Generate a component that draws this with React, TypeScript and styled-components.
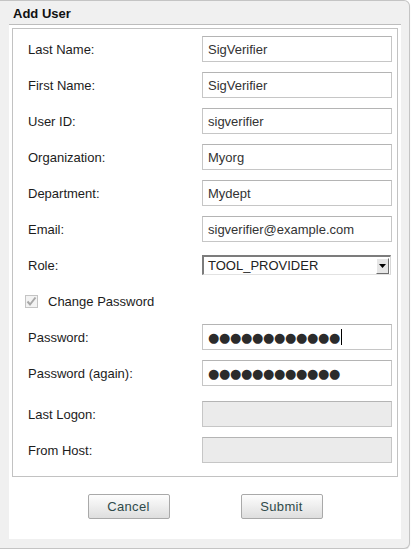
import React from "react";
import styled, { createGlobalStyle } from "styled-components";

const Global = createGlobalStyle`
  html, body { margin: 0; padding: 0; background: #ffffff; }
  body { font-family: "Liberation Sans", Arial, sans-serif; font-size: 13px; }
`;

const Dialog = styled.div`
  box-sizing: border-box;
  width: 410px;
  height: 549px;
  background: #f0f0f0;
  border: 1px solid #c4c4c4;
  border-left: none;
  border-radius: 0 6px 6px 0;
  box-shadow: 0 1px 1px rgba(0, 0, 0, 0.12);
  padding: 0 8px 9px 9px;
  display: flex;
  flex-direction: column;
`;

const Header = styled.div`
  height: 22px;
  display: flex;
  align-items: center;
  padding: 1px 0 0 4px;
  font-weight: bold;
  font-size: 13px;
  color: #111;
`;

const Panel = styled.div`
  flex: 1;
  background: #ffffff;
  border-top: 1px solid #bdbdbd;
  padding: 3px 3px 0 3px;
  display: flex;
  flex-direction: column;
`;

const Fieldset = styled.div`
  border: 1px solid #c2c2c2;
  padding: 7px 5px 13px 15px;
  display: flex;
  flex-direction: column;
  gap: 10px;
`;

const Row = styled.div<{ $extraTop?: number }>`
  display: grid;
  grid-template-columns: 174px 190px;
  align-items: center;
  height: 26px;
  margin-top: ${(p) => p.$extraTop ?? 0}px;
`;

const Label = styled.div`
  color: #1c1c1c;
  font-size: 13px;
`;

const Field = styled.div<{ $disabled?: boolean }>`
  box-sizing: border-box;
  height: 26px;
  border: 1px solid #c6c6c6;
  border-top-color: #b4b4b4;
  background: ${(p) => (p.$disabled ? "#ebebeb" : "#ffffff")};
  padding: 0 5px;
  display: flex;
  align-items: center;
  color: #333;
  font-size: 13px;
  white-space: nowrap;
  overflow: hidden;
`;

const Dots = styled.span`
  font-family: "DejaVu Sans", sans-serif;
  font-size: 13px;
  color: #2b2b2b;
  letter-spacing: -0.35px;
`;

const Caret = styled.span`
  display: inline-block;
  width: 1px;
  height: 16px;
  background: #000;
  margin-left: 1px;
`;

const Select = styled.div`
  box-sizing: border-box;
  height: 20px;
  width: 189px;
  border-top: 2px solid #7c7c7c;
  border-left: 2px solid #7c7c7c;
  border-right: 1px solid #d8d8d8;
  border-bottom: 1px solid #e2e2e2;
  display: flex;
  align-items: center;
  justify-content: space-between;
  padding-left: 4px;
  color: #222;
  font-size: 13px;
`;

const ArrowButton = styled.div`
  box-sizing: border-box;
  width: 13px;
  height: 16px;
  margin-right: 1px;
  background: #e6e6e6;
  border-top: 1px solid #ffffff;
  border-left: 1px solid #ffffff;
  border-right: 1px solid #6e6e6e;
  border-bottom: 1px solid #6e6e6e;
  display: flex;
  align-items: center;
  justify-content: center;
`;

const CheckRow = styled.div`
  display: flex;
  align-items: center;
  height: 26px;
  margin-left: -3px;
  gap: 10px;
  color: #1c1c1c;
`;

const Buttons = styled.div`
  display: flex;
  justify-content: center;
  gap: 71px;
  margin-top: 17px;
`;

const Button = styled.button`
  box-sizing: border-box;
  width: 82px;
  height: 25px;
  border: 1px solid #a9a9a9;
  border-radius: 2px;
  background: linear-gradient(#fdfdfd, #dedede);
  color: #2f4a4a;
  font-family: "Liberation Sans", Arial, sans-serif;
  font-size: 13px;
  padding: 0;
  letter-spacing: 0.3px;
`;

const rows: [string, string][] = [
  ["Last Name:", "SigVerifier"],
  ["First Name:", "SigVerifier"],
  ["User ID:", "sigverifier"],
  ["Organization:", "Myorg"],
  ["Department:", "Mydept"],
  ["Email:", "sigverifier@example.com"],
];

const DOTS = "●●●●●●●●●●●●";

export default function App() {
  return (
    <>
      <Global />
      <Dialog>
        <Header>Add User</Header>
        <Panel>
          <Fieldset>
            {rows.map(([l, v]) => (
              <Row key={l}>
                <Label>{l}</Label>
                <Field>{v}</Field>
              </Row>
            ))}
            <Row>
              <Label>Role:</Label>
              <Select>
                <span>TOOL_PROVIDER</span>
                <ArrowButton>
                  <svg width="7" height="4" viewBox="0 0 7 4">
                    <path d="M0 0H7L3.5 4Z" fill="#000" />
                  </svg>
                </ArrowButton>
              </Select>
            </Row>
            <CheckRow>
              <svg width="13" height="13" viewBox="0 0 13 13">
                <rect x="0.5" y="0.5" width="12" height="12" fill="#f3f3f3" stroke="#c4c4c4" />
                <path d="M2.5 6.5L5 9.5L10.5 2.5" fill="none" stroke="#a8a8a8" strokeWidth="2" />
              </svg>
              <span>Change Password</span>
            </CheckRow>
            <Row>
              <Label>Password:</Label>
              <Field>
                <Dots>{DOTS}</Dots>
                <Caret />
              </Field>
            </Row>
            <Row>
              <Label>Password (again):</Label>
              <Field>
                <Dots>{DOTS}</Dots>
              </Field>
            </Row>
            <Row $extraTop={5}>
              <Label>Last Logon:</Label>
              <Field $disabled />
            </Row>
            <Row>
              <Label>From Host:</Label>
              <Field $disabled />
            </Row>
          </Fieldset>
          <Buttons>
            <Button>Cancel</Button>
            <Button>Submit</Button>
          </Buttons>
        </Panel>
      </Dialog>
    </>
  );
}
